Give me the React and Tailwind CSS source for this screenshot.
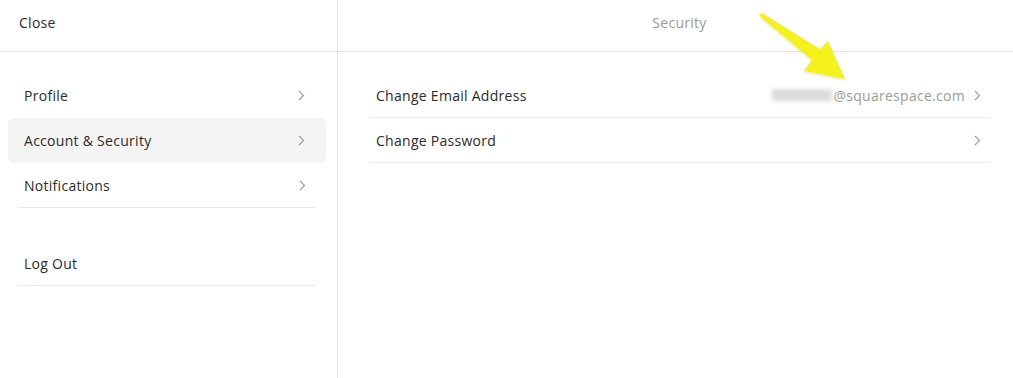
import React from 'react';

function Chevron({ className = '' }) {
  return (
    <svg width="7" height="11" viewBox="0 0 7 11" className={className} fill="none">
      <path d="M1 1l4.5 4.5L1 10" stroke="#9a9a9a" strokeWidth="1.1" />
    </svg>
  );
}

function NavItem({ label, active = false, border = false }) {
  return (
    <div className={`ml-2 mr-[11px] ${active ? 'bg-[#f4f4f4] rounded-md' : ''}`}>
      <div
        className={`h-[45px] flex items-center justify-between ${
          border ? 'border-b border-[#e9e9e9] mx-[10px] pl-[6px] pr-[10px]' : 'pl-4 pr-[21px]'
        }`}
      >
        <span className="text-[14px] tracking-[0.02em] text-[#2b2b2b]">{label}</span>
        <Chevron />
      </div>
    </div>
  );
}

function Row({ label, right }) {
  return (
    <div className="h-[45px] flex items-center justify-between border-b border-[#ececec] pl-[7px] pr-[9px]">
      <span className="text-[14px] tracking-[0.02em] text-[#2b2b2b]">{label}</span>
      <div className="flex items-center gap-[9px]">
        {right}
        <Chevron />
      </div>
    </div>
  );
}

export default function App() {
  return (
    <div
      className="relative w-[1013px] h-[378px] bg-white flex overflow-hidden"
      style={{ fontFamily: '"Open Sans", "Liberation Sans", sans-serif' }}
    >
      {/* Sidebar */}
      <div className="w-[338px] border-r border-[#e3e3e3] flex flex-col">
        <div className="h-[52px] border-b border-[#e3e3e3] flex items-center pl-[19px] pb-[6px]">
          <span className="text-[14px] tracking-[0.02em] text-[#2b2b2b]">Close</span>
        </div>
        <div className="pt-[21px]">
          <NavItem label="Profile" />
          <NavItem label="Account & Security" active />
          <NavItem label="Notifications" border />
          <div className="h-[33px]" />
          <div className="ml-[18px] mr-[21px] h-[45px] flex items-center border-b border-[#e9e9e9] pl-[6px]">
            <span className="text-[14px] tracking-[0.02em] text-[#2b2b2b]">Log Out</span>
          </div>
        </div>
      </div>

      {/* Content */}
      <div className="flex-1 flex flex-col">
        <div className="h-[52px] border-b border-[#e3e3e3] flex items-center justify-center pl-[8px] pb-[6px]">
          <span className="text-[14px] tracking-[0.02em] text-[#9b9b9b]">Security</span>
        </div>
        <div className="pt-[21px] pl-[31px] pr-[23px]">
          <Row
            label="Change Email Address"
            right={
              <span className="flex items-center text-[14px] tracking-[0.02em] text-[#9b9b9b]">
                <span className="w-[60px] h-[12px] bg-[#dcdcdc] blur-[2px] mr-[1px]" />
                @squarespace.com
              </span>
            }
          />
          <Row label="Change Password" />
        </div>
      </div>

      {/* Annotation arrow */}
      <svg
        className="absolute left-[750px] top-[5px] pointer-events-none"
        width="110"
        height="85"
        viewBox="750 5 110 85"
      >
        <defs>
          <filter id="sh" x="-20%" y="-20%" width="140%" height="140%">
            <feDropShadow dx="0" dy="1" stdDeviation="1.5" floodColor="#000" floodOpacity="0.15" />
          </filter>
        </defs>
        <polygon
          points="759,15 762,13 820,49 828,41 845,79 804,71 812,60 763,19"
          fill="#f4f11c"
          filter="url(#sh)"
        />
      </svg>
    </div>
  );
}
